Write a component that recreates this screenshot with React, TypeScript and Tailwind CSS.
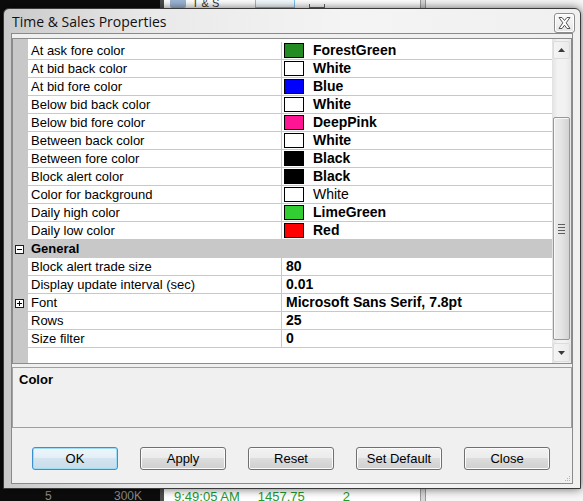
import type { ReactNode } from 'react';

// Colour properties shown in the first (unlabelled) category
const colorRows = [
  { label: 'At ask fore color', value: 'ForestGreen', swatch: 'bg-[#228b22]' },
  { label: 'At bid back color', value: 'White', swatch: 'bg-white' },
  { label: 'At bid fore color', value: 'Blue', swatch: 'bg-[#0000ff]' },
  { label: 'Below bid back color', value: 'White', swatch: 'bg-white' },
  { label: 'Below bid fore color', value: 'DeepPink', swatch: 'bg-[#ff1493]' },
  { label: 'Between back color', value: 'White', swatch: 'bg-white' },
  { label: 'Between fore color', value: 'Black', swatch: 'bg-black' },
  { label: 'Block alert color', value: 'Black', swatch: 'bg-black' },
  { label: 'Color for background', value: 'White', swatch: 'bg-white', isDefault: true },
  { label: 'Daily high color', value: 'LimeGreen', swatch: 'bg-[#32cd32]' },
  { label: 'Daily low color', value: 'Red', swatch: 'bg-[#ff0000]' },
];

const generalRows = [
  { label: 'Block alert trade size', value: '80' },
  { label: 'Display update interval (sec)', value: '0.01' },
  { label: 'Font', value: 'Microsoft Sans Serif, 7.8pt', expandable: true },
  { label: 'Rows', value: '25' },
  { label: 'Size filter', value: '0' },
];

const buttons = ['OK', 'Apply', 'Reset', 'Set Default', 'Close'];

function ExpandBox({ open }: { open: boolean }) {
  return (
    <span className="relative w-[9px] h-[9px] border border-[#1e1e1e] bg-white block">
      <span className="absolute left-[1px] top-[3px] w-[5px] h-[1px] bg-black" />
      {!open && <span className="absolute left-[3px] top-[1px] w-[1px] h-[5px] bg-black" />}
    </span>
  );
}

function PropRow({ label, children, expander }: { label: string; children: ReactNode; expander?: ReactNode }) {
  return (
    <div className="flex h-[18px]">
      <div className="w-[15px] shrink-0 bg-[#c8c8c8] flex items-center pl-[2px]">{expander}</div>
      <div className="w-[254px] shrink-0 bg-white border-b border-r border-[#c8c8c8] pl-[3px] flex items-center text-[13px] text-black whitespace-nowrap overflow-hidden">
        {label}
      </div>
      <div className="flex-1 bg-white border-b border-[#c8c8c8] flex items-center whitespace-nowrap overflow-hidden">
        {children}
      </div>
    </div>
  );
}

function Scrollbar() {
  return (
    <div className="w-[19px] shrink-0 flex flex-col pt-[2px] bg-[linear-gradient(90deg,#e2e2e2,#f2f2f2_30%,#f2f2f2_70%,#e6e6e6)]">
      <div className="h-[18px] mx-[1px] rounded-[2px] border border-[#dcdcdc] bg-[linear-gradient(90deg,#f4f4f4,#ebebeb)] flex items-center justify-center">
        <svg width="7" height="4" viewBox="0 0 7 4">
          <path d="M0 4 L3.5 0 L7 4 Z" fill="#3a3a3a" />
        </svg>
      </div>
      <div className="h-[58px]" />
      <div className="h-[223px] mx-[1px] rounded-[2px] border border-[#979797] bg-[linear-gradient(90deg,#ececec,#e4e4e4_50%,#d2d2d2)] shadow-[inset_1px_1px_0_#f8f8f8] flex flex-col items-center justify-center gap-[2px]">
        <span className="w-[7px] h-[1px] bg-[#5e5e5e]" />
        <span className="w-[7px] h-[1px] bg-[#5e5e5e]" />
        <span className="w-[7px] h-[1px] bg-[#5e5e5e]" />
        <span className="w-[7px] h-[1px] bg-[#5e5e5e]" />
      </div>
      <div className="flex-1" />
      <div className="h-[19px] mx-[1px] mb-[1px] rounded-[2px] border border-[#dcdcdc] bg-[linear-gradient(90deg,#f4f4f4,#ebebeb)] flex items-center justify-center">
        <svg width="7" height="4" viewBox="0 0 7 4">
          <path d="M0 0 L3.5 4 L7 0 Z" fill="#3a3a3a" />
        </svg>
      </div>
    </div>
  );
}

function WinButton({ label, isDefault }: { label: string; isDefault?: boolean }) {
  return (
    <button
      className={
        isDefault
          ? 'w-[86px] h-[23px] rounded-[3px] border border-[#3c8fd0] bg-[linear-gradient(#eef6fb_0%,#e2eef6_50%,#d3e4ef_50%,#c8dce9_100%)] shadow-[inset_0_0_0_1px_#9fdcf6] text-[13px] text-black'
          : 'w-[86px] h-[23px] rounded-[3px] border border-[#707070] bg-[linear-gradient(#f2f2f2_0%,#ebebeb_50%,#dddddd_50%,#cfcfcf_100%)] shadow-[inset_0_0_0_1px_#fbfbfb] text-[13px] text-black'
      }
    >
      {label}
    </button>
  );
}

export default function App() {
  return (
    <div className="relative w-[583px] h-[501px] overflow-hidden flex bg-[#0c0c0c] font-['Liberation_Sans',Arial,sans-serif]">
      {/* window behind the dialog */}
      <div className="w-[160px] shrink-0 flex flex-col justify-end">
        <div className="h-[11px] flex justify-between pl-[45px] pr-[18px] text-[12px] leading-[12px] text-[#8c8c8c]">
          <span>5</span>
          <span>300K</span>
        </div>
      </div>
      <div className="w-[4px] shrink-0 bg-[#4d4d4d]" />
      <div className="w-[256px] shrink-0 bg-white flex flex-col justify-between">
        <div className="h-[8px] flex items-end gap-[6px] pl-[6px] text-[11px] leading-[9px] text-[#333]">
          <span className="w-[16px] h-[8px] bg-[#9db7d6] rounded-b-[2px]" />
          <span>T &amp; S</span>
          <span className="ml-[30px] w-[40px] h-[8px] border border-t-0 border-[#7fc4ef] bg-[#f4fbff]" />
          <span className="ml-[8px] w-[16px] h-[4px] border border-t-0 border-[#666]" />
        </div>
        <div className="h-[11px] flex gap-[18px] pl-[10px] text-[13px] leading-[13px] text-[#1f9a2f]">
          <span>9:49:05 AM</span>
          <span>1457.75</span>
          <span className="ml-[20px]">2</span>
        </div>
      </div>
      <div className="w-[6px] shrink-0 bg-[#d8d8d8] border-x border-[#9a9a9a]" />
      <div className="flex-1 bg-[#f6f6f6]" />

      {/* dialog window */}
      <div className="absolute left-[3px] top-[8px] w-[578px] h-[481px] rounded-t-[6px] border border-[#3a3a3a] bg-[linear-gradient(90deg,#c9c9c9,#e9e9e9_25%,#f4f4f4_60%,#f0f0f0)] shadow-[0_0_10px_rgba(0,0,0,0.6)] flex flex-col">
        <div className="h-[24px] shrink-0 flex items-center justify-between pl-[8px] pr-[5px]">
          <span className="font-['Open_Sans',sans-serif] text-[14px] text-[#111] mt-[1px]">Time &amp; Sales Properties</span>
          <span className="w-[21px] h-[20px] mt-[4px] rounded-[3px] border border-[#8d8d8d] bg-[linear-gradient(#fafafa,#e6e6e6)] shadow-[inset_0_0_0_1px_#ffffff] flex items-center justify-center">
            <svg width="13" height="12" viewBox="0 0 13 12">
              <polygon
                points="1,0.5 4,0.5 6.5,3.5 9,0.5 12,0.5 8.2,5.8 12,11.5 9,11.5 6.5,8.2 4,11.5 1,11.5 4.8,5.8"
                fill="#ffffff"
                stroke="#555555"
                strokeWidth="1"
                strokeLinejoin="round"
              />
            </svg>
          </span>
        </div>

        <div className="relative flex-1 mx-[7px] mb-[4px] border border-[#8a8a8a] bg-[#f0f0f0] pt-[4px] flex flex-col">
          {/* property grid */}
          <div className="h-[326px] shrink-0 border border-[#8c8c8c] bg-white flex">
            <div className="flex-1 flex flex-col pt-[3px] bg-[linear-gradient(90deg,#c8c8c8_15px,#ffffff_15px)]">
              {colorRows.map((r) => (
                <PropRow key={r.label} label={r.label}>
                  <span className={`ml-[2px] w-[20px] h-[15px] border border-black shrink-0 ${r.swatch}`} />
                  <span className={r.isDefault ? 'ml-[9px] text-[14px] text-black' : 'ml-[9px] text-[14px] font-bold text-black'}>
                    {r.value}
                  </span>
                </PropRow>
              ))}
              <div className="h-[18px] bg-[#c8c8c8] flex items-center">
                <span className="w-[15px] pl-[2px] flex items-center">
                  <ExpandBox open />
                </span>
                <span className="pl-[3px] text-[13px] font-bold text-black">General</span>
              </div>
              {generalRows.map((r) => (
                <PropRow key={r.label} label={r.label} expander={r.expandable ? <ExpandBox open={false} /> : undefined}>
                  <span className="ml-[4px] text-[14px] font-bold text-black">{r.value}</span>
                </PropRow>
              ))}
            </div>
            <Scrollbar />
          </div>

          {/* description pane */}
          <div className="mt-[3px] h-[61px] shrink-0 border border-[#a0a0a0] pl-[6px] pt-[4px]">
            <span className="block text-[13px] leading-[15px] font-bold text-black">Color</span>
          </div>

          <div className="mt-[19px] pl-[20px] flex gap-[22px]">
            {buttons.map((b, i) => (
              <WinButton key={b} label={b} isDefault={i === 0} />
            ))}
          </div>

          {/* size grip */}
          <svg className="absolute right-[1px] bottom-[1px]" width="8" height="8" viewBox="0 0 8 8">
            <rect x="6" y="2" width="1" height="1" fill="#b5b5b5" />
            <rect x="4" y="4" width="1" height="1" fill="#b5b5b5" />
            <rect x="6" y="4" width="1" height="1" fill="#b5b5b5" />
            <rect x="2" y="6" width="1" height="1" fill="#b5b5b5" />
            <rect x="4" y="6" width="1" height="1" fill="#b5b5b5" />
            <rect x="6" y="6" width="1" height="1" fill="#b5b5b5" />
          </svg>
        </div>
      </div>
    </div>
  );
}
